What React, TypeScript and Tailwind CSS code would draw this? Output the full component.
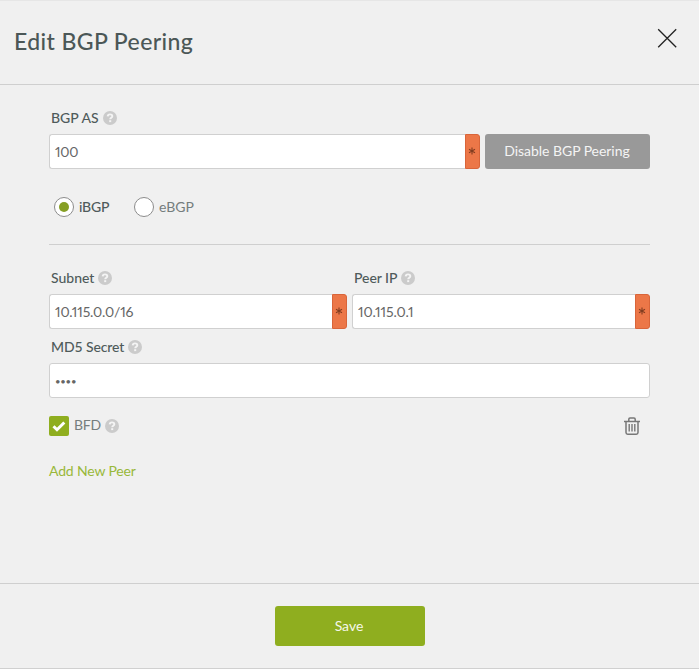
import React from "react";

function Help() {
  return (
    <svg className="ml-1 h-[14px] w-[14px] shrink-0" viewBox="0 0 14 14">
      <circle cx="7" cy="7" r="7" fill="#cbcbcb" />
      <path d="M4.700 5.400C4.800 4 5.800 3.400 7 3.400c1.300 0 2.300.7 2.300 1.800 0 1.500-2.100 1.500-2.100 3" fill="none" stroke="#f4f4f4" strokeWidth="1.900" />
      <rect x="6.200" y="9.200" width="2" height="1.900" fill="#f4f4f4" />
    </svg>
  );
}

function Label({ text, className }: { text: string; className: string }) {
  return (
    <div className="flex h-5 items-center pl-[2px] text-[14px] leading-5 font-medium text-[#4f5b5b]">
      <span className={className}>{text}</span>
      <Help />
    </div>
  );
}

function Field({ children, required = true }: { children: React.ReactNode; required?: boolean }) {
  return (
    <div className="flex h-[35px] w-full">
      <div
        className={
          "flex flex-1 items-center border border-[#d0d0d0] bg-white pl-[5px] text-[14px] text-[#666] proportional-nums " +
          (required ? "rounded-l-[3px] border-r-0" : "rounded-[3px]")
        }
      >
        {children}
      </div>
      {required && (
        <div className="flex w-[15px] items-center justify-center rounded-r-[3px] border border-[#d9653a] bg-[#ec7748] pr-[1px] pb-[1px]">
          <svg className="h-[8px] w-[8px]" viewBox="0 0 8 8" stroke="#823d20" strokeWidth="1.100">
            <path d="M4 .6v6.800M1 2.300l6 3.400M7 2.300L1 5.700" />
          </svg>
        </div>
      )}
    </div>
  );
}

export default function App() {
  return (
    <div className="flex h-[669px] w-[699px] flex-col border-t border-b border-t-[#e6e6e6] border-b-[#d0d0d0] bg-[#f0f0f0] font-['Lato','Liberation_Sans',sans-serif]">
      <header className="flex h-[84px] items-center justify-between border-b border-[#cfcfcf] pr-[22px] pb-[3px] pl-[14px]">
        <h1 className="text-[23px] leading-8 font-medium tracking-[0.4px] text-[#4b5757]">Edit BGP Peering</h1>
        <svg className="mb-[7px] h-5 w-5" viewBox="0 0 20 20" stroke="#222" strokeWidth="1.300">
          <path d="M1.200 1.200l18 18M19.200 1.200l-18 18" />
        </svg>
      </header>

      <main className="flex flex-1 flex-col px-[49px] pt-[23px]">
        <Label text="BGP AS" className="tracking-[0px]" />
        <div className="mt-[6px] flex gap-[5px]">
          <div className="w-[431px]">
            <Field>
              <span className="tracking-[-0.3px]">100</span>
            </Field>
          </div>
          <button className="h-[35px] w-[165px] rounded-[3px] bg-[#999] pr-[1px] pb-[2px] text-[14px] text-[#f4f4f4]">
            <span className="tracking-[-0.05px]">Disable BGP Peering</span>
          </button>
        </div>

        <div className="mt-7 flex h-5 items-center pl-[5px] text-[14px] leading-5">
          <div className="flex w-20 items-center gap-[5px] font-medium text-[#4f5b5b]">
            <span className="flex h-5 w-5 items-center justify-center rounded-full border border-[#8c8c8c] bg-white">
              <span className="h-[10px] w-[10px] rounded-full bg-[#869f25]" />
            </span>
            <span className="-mt-[1px] tracking-[-0.2px]">iBGP</span>
          </div>
          <div className="flex items-center gap-[5px] text-[#757d7d]">
            <span className="h-5 w-5 rounded-full border border-[#8c8c8c] bg-white" />
            <span className="-mt-[1px] tracking-[0px]">eBGP</span>
          </div>
        </div>

        <hr className="mt-[27px] border-t border-[#cfcfcf]" />

        <div className="mt-[23px] flex gap-[5px]">
          <div className="w-[298px]">
            <Label text="Subnet" className="tracking-[0px]" />
            <div className="mt-[6px]">
              <Field>
                <span className="tracking-[-0.15px]">10.115.0.0/16</span>
              </Field>
            </div>
          </div>
          <div className="w-[298px]">
            <Label text="Peer IP" className="tracking-[-0.05px]" />
            <div className="mt-[6px]">
              <Field>
                <span className="tracking-[-0.1px]">10.115.0.1</span>
              </Field>
            </div>
          </div>
        </div>

        <div className="mt-2">
          <Label text="MD5 Secret" className="tracking-[-0.1px]" />
        </div>
        <div className="mt-[6px]">
          <Field required={false}>
            <span className="pt-[3px] text-[9.500px] leading-4 tracking-[-0.2px]">••••</span>
          </Field>
        </div>

        <div className="mt-[18px] flex h-5 items-center justify-between pr-[10px]">
          <div className="flex items-center text-[14px] leading-5 text-[#757d7d]">
            <span className="mr-[5px] flex h-5 w-5 items-center justify-center rounded-[2px] bg-[#8fae1f]">
              <svg className="h-[12px] w-[14px]" viewBox="0 0 14 12" fill="none" stroke="#fff" strokeWidth="3">
                <path d="M1.500 6.200l3.500 3.500L12.300 2.500" />
              </svg>
            </span>
            <span className="pb-[2px] tracking-[-0.2px]">BFD</span>
            <Help />
          </div>
          <svg className="h-[18px] w-4" viewBox="0 0 16 18" fill="none" stroke="#777">
            <path d="M0 4.500h16M4.800 4V2.200Q4.800 1 6 1h4q1.200 0 1.200 1.200V4M2 5v10.500Q2 17.200 3.700 17.200h8.600q1.700 0 1.700-1.700V5" strokeWidth="1.500" />
            <path d="M5.200 7v7.500M8 7v7.500M10.800 7v7.500" strokeWidth="1.400" />
          </svg>
        </div>

        <a className="mt-[25px] self-start text-[14px] leading-5 text-[#99b83a]">
          <span className="tracking-[-0.15px]">Add New Peer</span>
        </a>
      </main>

      <footer className="flex h-[85px] justify-center border-t border-[#cfcfcf] pt-[22px]">
        <button className="h-10 w-[150px] rounded-[3px] bg-[#8fae1f] pr-[1px] pb-[1px] text-[14px] text-[#f5f7ea]">
          <span className="tracking-[0px]">Save</span>
        </button>
      </footer>
    </div>
  );
}
